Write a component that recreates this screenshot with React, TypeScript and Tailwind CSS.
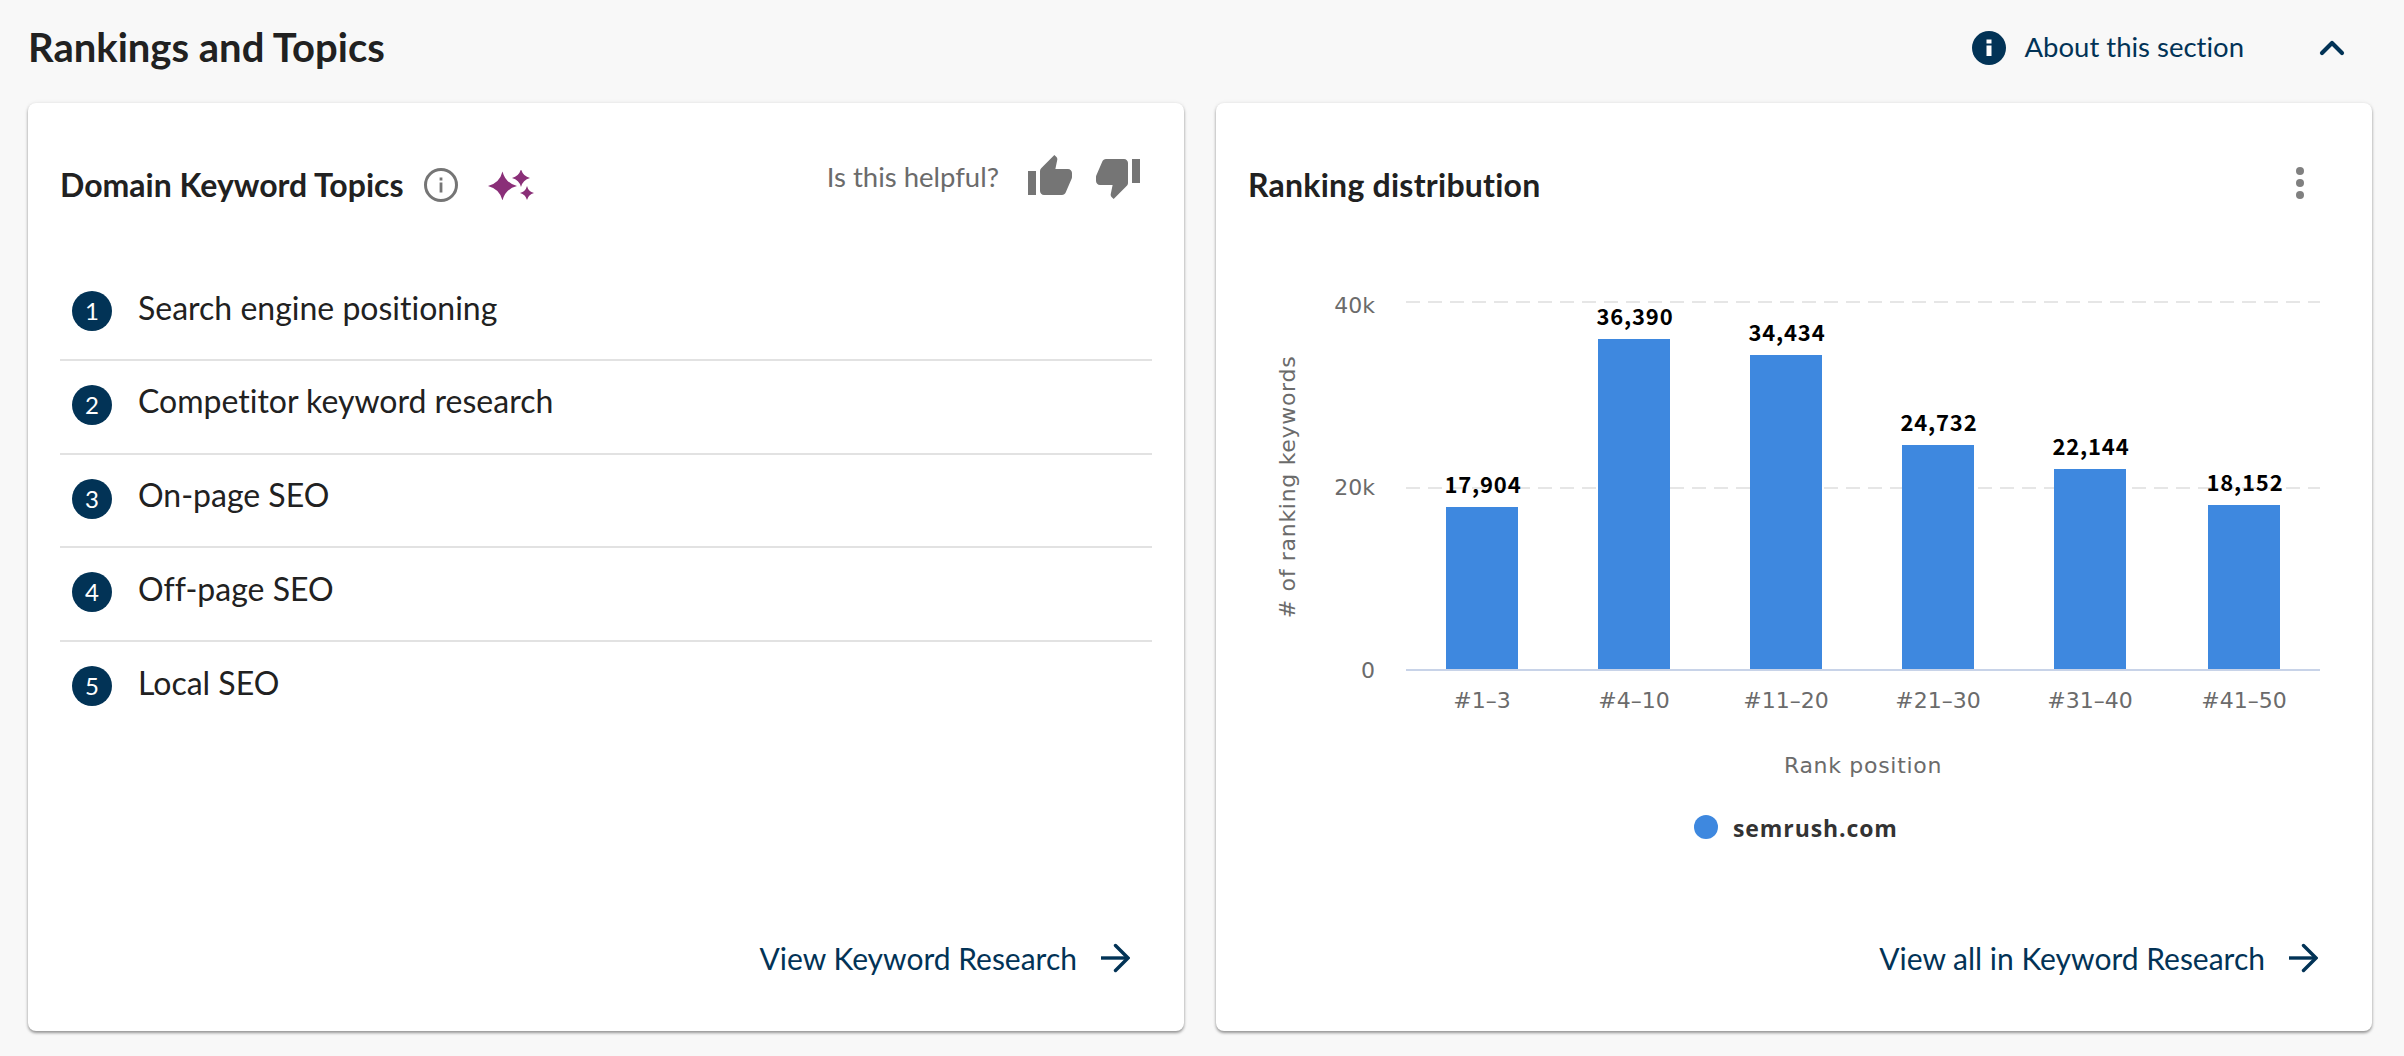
import { ChevronUp } from 'lucide-react'

const TOPICS = ['Search engine positioning', 'Competitor keyword research', 'On-page SEO', 'Off-page SEO', 'Local SEO']

const BARS = [
  { label: '#1–3', value: '17,904', x: 1446, top: 507 },
  { label: '#4–10', value: '36,390', x: 1598, top: 339 },
  { label: '#11–20', value: '34,434', x: 1750, top: 355 },
  { label: '#21–30', value: '24,732', x: 1902, top: 445 },
  { label: '#31–40', value: '22,144', x: 2054, top: 469 },
  { label: '#41–50', value: '18,152', x: 2208, top: 505 },
]

const CHART_FONT = '"DejaVu Sans", "Noto Sans", sans-serif'
const VALUE_FONT = '"Noto Sans CJK JP", "Noto Sans", sans-serif'

// four point star, slightly concave sides
function star(cx: number, cy: number, r: number) {
  const k = r * 0.2
  return `M${cx} ${cy - r}Q${cx + k} ${cy - k} ${cx + r} ${cy}Q${cx + k} ${cy + k} ${cx} ${cy + r}Q${cx - k} ${cy + k} ${cx - r} ${cy}Q${cx - k} ${cy - k} ${cx} ${cy - r}Z`
}

function InfoOutline() {
  return (
    <svg width={36} height={36} viewBox="0 0 36 36" className="shrink-0">
      <circle cx={18} cy={18} r={15.5} fill="none" stroke="#757575" strokeWidth={3} />
      <rect x={16.6} y={15.5} width={2.8} height={10} fill="#757575" />
      <rect x={16.6} y={10.5} width={2.8} height={3} fill="#757575" />
    </svg>
  )
}

function Sparkles() {
  return (
    <svg width={46} height={30} viewBox="0 0 46 30" className="shrink-0">
      <path d={star(14.5, 16, 14.5)} fill="#8a2f78" />
      <path d={star(33, 8, 9)} fill="#8a2f78" />
      <path d={star(39, 23, 7)} fill="#8a2f78" />
    </svg>
  )
}

function CardFooter({ label }: { label: string }) {
  return (
    <div className="h-[146px] shrink-0 flex items-center justify-end gap-[23px] pr-[54px] text-[30px] text-[#023356]">
      <span>{label}</span>
      <svg width={30} height={30} viewBox="0 0 30 30" fill="none" stroke="#023356" strokeWidth={3.4} className="shrink-0">
        <path d="M1 15H27" />
        <path d="M15.500 2.500L28 15L15.500 27.500" strokeLinecap="round" />
      </svg>
    </div>
  )
}

function TopicsCard() {
  return (
    <section className="h-[928px] flex flex-col bg-white rounded-lg shadow-[0_2px_3px_rgba(0,0,0,0.38),0_0_4px_rgba(0,0,0,0.08)]">
      <header className="h-[164px] shrink-0 flex items-center pl-[32px] pr-[42px]">
        <h2 className="text-[32px] font-bold text-[#212121]">Domain Keyword Topics</h2>
        <span className="ml-[19px]"><InfoOutline /></span>
        <span className="ml-[29px]"><Sparkles /></span>
        <div className="ml-auto flex items-center -mt-[16px]">
          <span className="text-[27.500px] text-[#6b6b6b] mr-[27px]">Is this helpful?</span>
          <svg width={48} height={48} viewBox="0 0 24 24" fill="#757575" className="mr-[20px]">
            <path d="M1 21h4V9H1v12zm22-11c0-1.100-.9-2-2-2h-6.310l.95-4.570.03-.32c0-.41-.17-.79-.44-1.060L14.170 1 7.590 7.590C7.220 7.950 7 8.450 7 9v10c0 1.100.9 2 2 2h9c.83 0 1.540-.5 1.840-1.220l3.020-7.050c.09-.23.14-.47.14-.73v-2z" />
          </svg>
          <svg width={48} height={48} viewBox="0 0 24 24" fill="#757575">
            <path d="M15 3H6c-.83 0-1.540.5-1.840 1.220l-3.020 7.050c-.09.23-.14.47-.14.73v2c0 1.100.9 2 2 2h6.310l-.95 4.570-.03.32c0 .41.17.79.44 1.060L9.830 23l6.590-6.590c.36-.36.58-.86.58-1.410V5c0-1.100-.9-2-2-2zm4 0v12h4V3h-4z" />
          </svg>
        </div>
      </header>
      <ol className="flex-1 mx-[32px]">
        {TOPICS.map((topic, i) => (
          <li key={topic} className="h-[93.750px] flex items-start pt-[24px] border-b-2 border-[#e2e2e2] last:border-b-0">
            <span className="w-[40px] h-[40px] ml-[12px] rounded-full bg-[#023356] text-white text-[24px] flex items-center justify-center shrink-0">
              {i + 1}
            </span>
            <span className="ml-[26px] -mt-[0.500px] text-[32px] leading-[34px] text-[#212121]">{topic}</span>
          </li>
        ))}
      </ol>
      <CardFooter label="View Keyword Research" />
    </section>
  )
}

function DistributionChart() {
  return (
    <svg width={1156} height={618} viewBox="1216 267 1156 618" className="block" style={{ fontFamily: CHART_FONT }}>
      {[302, 488].map((y) => (
        <line key={y} x1={1406} x2={2320} y1={y} y2={y} stroke="#e6e6e6" strokeWidth={2} strokeDasharray="14 8" />
      ))}
      {[['40k', 313], ['20k', 495], ['0', 678]].map(([t, y]) => (
        <text key={t} x={1375} y={y} textAnchor="end" fontSize={22} fill="#6b6b6b">{t}</text>
      ))}
      <text transform="translate(1295 487) rotate(-90)" textAnchor="middle" fontSize={22} letterSpacing={0.7} fill="#6b6b6b">
        # of ranking keywords
      </text>
      {BARS.map((b) => (
        <g key={b.label}>
          <rect x={b.x} y={b.top} width={72} height={669 - b.top} fill="#3e88df" />
          <text x={b.x + 37} y={b.top - 14} textAnchor="middle" fontSize={22} fontWeight={700} letterSpacing={0.8} fill="#000" style={{ fontFamily: VALUE_FONT }}>{b.value}</text>
          <text x={b.x + 36} y={708} textAnchor="middle" fontSize={22} fill="#6b6b6b">{b.label}</text>
        </g>
      ))}
      <line x1={1406} x2={2320} y1={670} y2={670} stroke="#c8d3e8" strokeWidth={2} />
      <text x={1863} y={773} textAnchor="middle" fontSize={22} letterSpacing={0.7} fill="#6b6b6b">Rank position</text>
      <circle cx={1706} cy={827} r={12} fill="#3e88df" />
      <text x={1733} y={837} fontSize={23} fontWeight={700} letterSpacing={0.9} fill="#333" style={{ fontFamily: '"Open Sans", sans-serif' }}>semrush.com</text>
    </svg>
  )
}

function DistributionCard() {
  return (
    <section className="h-[928px] flex flex-col bg-white rounded-lg shadow-[0_2px_3px_rgba(0,0,0,0.38),0_0_4px_rgba(0,0,0,0.08)]">
      <header className="h-[164px] shrink-0 flex items-center justify-between pl-[32px] pr-[68px]">
        <h2 className="text-[32px] font-bold tracking-[0.25px] text-[#212121]">Ranking distribution</h2>
        <div className="flex flex-col gap-[4px] -mt-[4px]">
          <span className="w-[8px] h-[8px] rounded-full bg-[#808080]" />
          <span className="w-[8px] h-[8px] rounded-full bg-[#808080]" />
          <span className="w-[8px] h-[8px] rounded-full bg-[#808080]" />
        </div>
      </header>
      <div className="flex-1 min-h-0">
        <DistributionChart />
      </div>
      <CardFooter label="View all in Keyword Research" />
    </section>
  )
}

export default function App() {
  return (
    <div className="w-[2404px] h-[1056px] overflow-hidden bg-[#f8f8f8] pl-[28px] pr-[32px] [font-variant-ligatures:none] font-['Lato','Noto_Sans',sans-serif]">
      <div className="h-[103px] flex items-center pb-[8px]">
        <h1 className="-mt-[1px] text-[40px] font-bold text-[#212121]">Rankings and Topics</h1>
        <div className="ml-auto flex items-center text-[#023356]">
          <svg width={34} height={34} viewBox="0 0 34 34" className="shrink-0">
            <circle cx={17} cy={17} r={17} fill="#023356" />
            <rect x={14.500} y={14.500} width={5} height={10.500} fill="#fff" />
            <rect x={14.500} y={8.500} width={5} height={4} fill="#fff" />
          </svg>
          <span className="ml-[19px] -mt-[1px] text-[27.500px]">About this section</span>
          <ChevronUp size={40} strokeWidth={2.5} className="ml-[68px] mr-[20px] shrink-0" />
        </div>
      </div>
      <div className="grid grid-cols-2 gap-[32px]">
        <TopicsCard />
        <DistributionCard />
      </div>
    </div>
  )
}
